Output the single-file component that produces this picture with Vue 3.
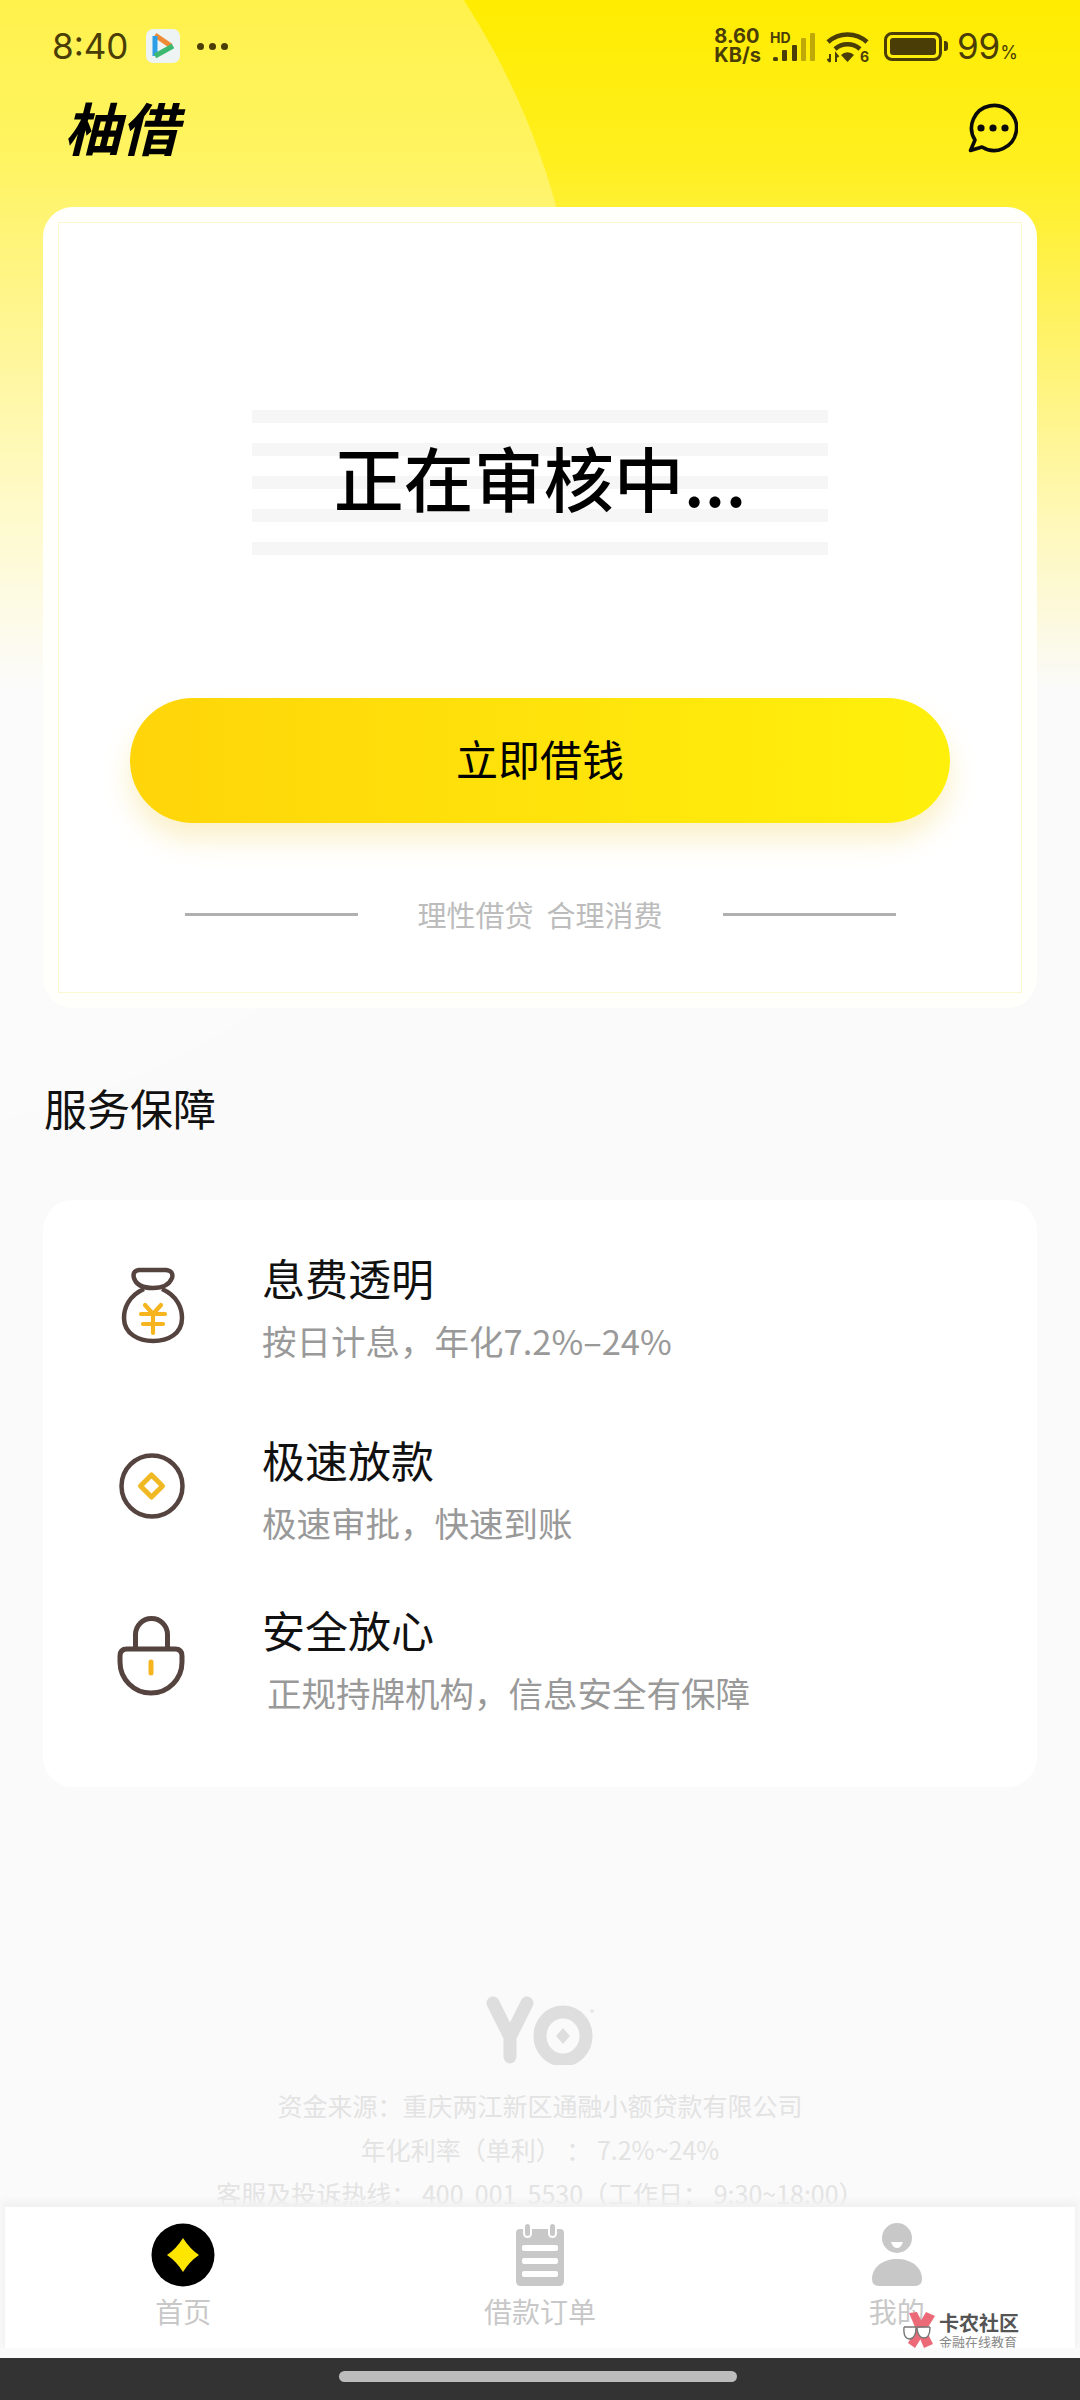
<script setup>
const stripes = [1, 2, 3, 4, 5];

const services = [
  { title: "息费透明", desc: "按日计息\uFF0C年化7.2%–24%", icon: "bag" },
  { title: "极速放款", desc: "极速审批\uFF0C快速到账", icon: "coin" },
  { title: "安全放心", desc: "正规持牌机构\uFF0C信息安全有保障", icon: "lock" },
];

const footerLines = [
  "资金来源\uFF1A重庆两江新区通融小额贷款有限公司",
  "年化利率\uFF08单利\uFF09\u00A0\uFF1A\u00A07.2%~24%",
  "客服及投诉热线\uFF1A\u00A0400\u00A0\u00A0001\u00A0\u00A05530\uFF08工作日\uFF1A\u00A09:30~18:00\uFF09",
];
</script>

<template>
  <div class="page">
    <div class="bg-circle"></div>

    <div class="main">
      <div class="status">
        <div class="status-left">
          <span class="time">8:40</span>
          <svg class="app-icon" width="34" height="34" viewBox="0 0 34 34">
            <rect width="34" height="34" rx="7" fill="#eef3f4" />
            <path d="M9 6 L25 17" stroke="#ef8a35" stroke-width="5" fill="none" />
            <path d="M9 7 L9 27" stroke="#2d9fe8" stroke-width="5" fill="none" />
            <path d="M9 27 L27 17" stroke="#3cb871" stroke-width="5" fill="none" />
          </svg>
          <span class="dots"><i></i><i></i><i></i></span>
        </div>
        <div class="status-right">
          <div class="speed"><span>8.60</span><span>KB/s</span></div>
          <svg width="46" height="34" viewBox="0 0 46 34">
            <text x="1" y="14" class="hd">HD</text>
            <rect x="4" y="28" width="5" height="4" rx="1.5" fill="#4a3d05" />
            <rect x="13" y="21" width="5" height="11" rx="1" fill="#4a3d05" />
            <rect x="23" y="16" width="5" height="16" rx="1" fill="#4a3d05" />
            <rect x="32" y="9" width="5" height="23" rx="1" fill="#bfa908" />
            <rect x="41" y="4" width="5" height="28" rx="1" fill="#bfa908" />
          </svg>
          <svg class="wifi" width="44" height="34" viewBox="0 0 44 34">
            <path d="M2 13 A 29 29 0 0 1 41 13" stroke="#4a3d05" stroke-width="4.5" fill="none" />
            <path d="M9 20 A 19 19 0 0 1 34 20" stroke="#4a3d05" stroke-width="4.5" fill="none" />
            <path d="M15 26 A 9 9 0 0 1 28 26 L21.5 33 Z" fill="#4a3d05" />
            <path d="M4 25 V33 M1.5 30 L4 33 M10 33 V25 L12.5 28" stroke="#4a3d05" stroke-width="2" fill="none" />
            <text x="34" y="33" class="six">6</text>
          </svg>
          <div class="battery"><div class="battery-fill"></div></div>
          <div class="battery-tip"></div>
          <span class="percent">99<small>%</small></span>
        </div>
      </div>

      <div class="header">
        <div class="brand">柚借</div>
        <svg class="chat" width="50" height="50" viewBox="0 0 50 50">
          <path d="M2.5 47.5 L7 37 A 22.5 22.5 0 1 1 14 44 Z" fill="none" stroke="#0a0a0a" stroke-width="3.6" stroke-linejoin="round" />
          <circle cx="13" cy="25" r="3.6" fill="#0a0a0a" />
          <circle cx="25" cy="25" r="3.6" fill="#0a0a0a" />
          <circle cx="37" cy="25" r="3.6" fill="#0a0a0a" />
        </svg>
      </div>

      <div class="card">
        <div class="card-inner">
          <div class="review">
            <div class="stripes">
              <div v-for="s in stripes" :key="s" class="stripe"></div>
            </div>
            <div class="review-text">正在审核中...</div>
          </div>
          <button class="borrow">立即借钱</button>
          <div class="slogan">
            <span class="slogan-line"></span>
            <span class="slogan-text">理性借贷&nbsp;&nbsp;合理消费</span>
            <span class="slogan-line"></span>
          </div>
        </div>
      </div>

      <div class="section-title">服务保障</div>

      <div class="service-card">
        <div v-for="item in services" :key="item.icon" class="row" :class="'row-' + item.icon">
          <div class="row-icon">
            <svg v-if="item.icon === 'bag'" width="80" height="80" viewBox="0 0 80 80">
              <path d="M26 6 H53 Q61 7 59 14 Q55 24 40 24 Q24 24 21 14 Q19 7 26 6 Z" fill="none" stroke="#55433f" stroke-width="4.5" />
              <path d="M31 25 C15 32 11 45 11 54 C11 70 26 77 40 77 C55 77 69 70 69 54 C69 45 65 32 49 25" fill="none" stroke="#55433f" stroke-width="4.5" />
              <path d="M32 41 L40 50 L48 41 M28 50 H52 M30 60 H50 M40 50 V69" fill="none" stroke="#f6b51e" stroke-width="4.2" stroke-linecap="round" />
            </svg>
            <svg v-else-if="item.icon === 'coin'" width="80" height="80" viewBox="0 0 80 80">
              <circle cx="39" cy="40" r="30.5" fill="none" stroke="#55433f" stroke-width="4.5" />
              <path d="M38.5 29 L49.5 40 L38.5 51 L27.5 40 Z" fill="none" stroke="#f0b923" stroke-width="5" stroke-linejoin="round" />
            </svg>
            <svg v-else width="80" height="80" viewBox="0 0 80 80">
              <path d="M22.5 33 V18.5 A 16 16 0 0 1 54.5 18.5 V33" fill="none" stroke="#55433f" stroke-width="5" />
              <path d="M14 33 H62 Q69 33 69 40 V46 A 31 31 0 0 1 7 46 V40 Q7 33 14 33 Z" fill="none" stroke="#55433f" stroke-width="5" />
              <path d="M38 46 V57" stroke="#f6b51e" stroke-width="5" stroke-linecap="round" />
            </svg>
          </div>
          <div class="row-text">
            <div class="row-title">{{ item.title }}</div>
            <div class="row-desc">{{ item.desc }}</div>
          </div>
        </div>
      </div>

      <div class="company">
        <svg width="110" height="70" viewBox="0 0 110 70">
          <path d="M8 8 L25 42 L25 62 M25 42 L42 8" fill="none" stroke="#dedede" stroke-width="13" stroke-linecap="round" stroke-linejoin="round" />
          <ellipse cx="78" cy="41" rx="23" ry="24" fill="none" stroke="#dedede" stroke-width="13" />
          <path d="M78 33 L85 41 L78 49 L71 41 Z" fill="#dedede" />
          <circle cx="107" cy="16" r="2" fill="#e8e8e8" />
        </svg>
        <div class="company-lines">
          <div v-for="line in footerLines" :key="line">{{ line }}</div>
        </div>
      </div>
    </div>

    <div class="tabbar">
      <div class="tab">
        <svg width="64" height="64" viewBox="0 0 64 64">
          <circle cx="32" cy="32" r="31.5" fill="#000" />
          <path d="M32 15 Q38.5 25.5 48 32 Q38.5 38.5 32 49 Q25.5 38.5 16 32 Q25.5 25.5 32 15 Z" fill="#ffe600" />
        </svg>
        <span>首页</span>
      </div>
      <div class="tab">
        <svg width="64" height="64" viewBox="0 0 64 64">
          <path d="M12 6 H52 Q56 6 56 10 V58 Q56 63 51 63 H13 Q8 63 8 58 V10 Q8 6 12 6 Z" fill="#c8c8c8" />
          <rect x="16" y="0" width="7" height="14" rx="3.5" fill="#c8c8c8" stroke="#fff" stroke-width="2" />
          <rect x="41" y="0" width="7" height="14" rx="3.5" fill="#c8c8c8" stroke="#fff" stroke-width="2" />
          <rect x="14" y="22" width="36" height="6" rx="2" fill="#fff" />
          <rect x="14" y="35" width="36" height="6" rx="2" fill="#fff" />
          <rect x="14" y="48" width="36" height="6" rx="2" fill="#fff" />
        </svg>
        <span>借款订单</span>
      </div>
      <div class="tab">
        <svg width="64" height="64" viewBox="0 0 64 64">
          <circle cx="32" cy="15" r="15" fill="#c8c8c8" />
          <path d="M26 19 H38 Q36 25 32 25 Q28 25 26 19 Z" fill="#fff" />
          <path d="M32 36 C46 36 57 44 57 56 Q57 63 50 63 H14 Q7 63 7 56 C7 44 18 36 32 36 Z" fill="#c8c8c8" />
        </svg>
        <span>我的</span>
      </div>
      <div class="watermark">
        <svg width="35" height="36" viewBox="0 0 35 36">
          <path d="M7 1 L15 0 L31 32 L22 36 Z" fill="#ec6a78" />
          <path d="M33 4 L24 0 L6 31 L13 36 Z" fill="#ec6a78" />
          <path d="M2 15 H28 M2 15 Q1 27 8 27 Q14 26 14 16 M15 16 Q16 26 22 26 Q28 26 28 15" fill="#fff" stroke="#777" stroke-width="1.4" />
        </svg>
        <div class="watermark-text">
          <b>卡农社区</b>
          <span>金融在线教育</span>
        </div>
      </div>
    </div>

    <div class="tab-gap"></div>
    <div class="navbar"><div class="handle"></div></div>
  </div>
</template>

<style>
html,
body {
  margin: 0;
  padding: 0;
}
</style>

<style scoped>
.page {
  position: relative;
  width: 1080px;
  height: 2400px;
  overflow: hidden;
  display: flex;
  flex-direction: column;
  font-family: "Noto Sans CJK SC", "Noto Sans", sans-serif;
  background: linear-gradient(180deg, #ffec00 0, #ffef1e 160px, #fff266 330px, #fff8b8 520px, #fafafa 690px);
}

.bg-circle {
  position: absolute;
  left: -890px;
  top: -336px;
  width: 1472px;
  height: 1472px;
  border-radius: 50%;
  background: rgba(255, 255, 255, 0.3);
}

.main {
  position: relative;
  flex: 1;
  min-height: 0;
  overflow: hidden;
}

/* status bar */
.status {
  height: 92px;
  display: flex;
  justify-content: space-between;
  align-items: center;
  padding: 0 62px 0 52px;
  color: #4a3d05;
}

.status-left,
.status-right {
  display: flex;
  align-items: center;
}

.time {
  font-family: Inter, sans-serif;
  font-size: 35px;
  width: 94px;
}

.dots {
  display: flex;
  gap: 5px;
  margin-left: 17px;
}

.dots i {
  width: 7px;
  height: 7px;
  border-radius: 50%;
  background: #4a3d05;
}

.speed {
  display: flex;
  flex-direction: column;
  font-family: Inter, sans-serif;
  font-weight: 700;
  font-size: 20px;
  line-height: 19px;
  margin-right: 8px;
}

.hd {
  font-family: Inter, sans-serif;
  font-size: 14px;
  font-weight: 700;
  fill: #4a3d05;
}

.six {
  font-family: Inter, sans-serif;
  font-size: 14px;
  font-weight: 700;
  fill: #4a3d05;
}

.wifi {
  margin-left: 11px;
}

.battery {
  box-sizing: border-box;
  width: 58px;
  height: 29px;
  margin-left: 14px;
  border: 3px solid #4a3d05;
  border-radius: 8px;
  padding: 3px;
}

.battery-fill {
  height: 100%;
  background: #4a3d05;
  border-radius: 3px;
}

.battery-tip {
  width: 4px;
  height: 10px;
  margin-left: 2px;
  background: #4a3d05;
  border-radius: 0 3px 3px 0;
}

.percent {
  margin-left: 9px;
  font-family: Inter, sans-serif;
  font-size: 35px;
}

.percent small {
  font-size: 18px;
}

.header {
  height: 115px;
  display: flex;
  justify-content: space-between;
  align-items: flex-start;
  padding: 2px 62px 0 64px;
  box-sizing: border-box;
}

.chat {
  margin-top: 9px;
}

.brand {
  font-size: 57px;
  line-height: 64px;
  font-weight: 700;
  font-style: italic;
  color: #000;
}

/* main card */
.card {
  box-sizing: border-box;
  margin: 0 43px;
  height: 801px;
  padding: 15px;
  background: #fffffb;
  border-radius: 30px;
}

.card-inner {
  box-sizing: border-box;
  height: 771px;
  padding-top: 187px;
  border: 1px solid #fbf8d2;
  background: #fff;
  display: flex;
  flex-direction: column;
  align-items: center;
}

.review {
  display: grid;
  width: 576px;
  height: 145px;
}

.stripes,
.review-text {
  grid-area: 1 / 1;
}

.stripes {
  display: flex;
  flex-direction: column;
  justify-content: space-between;
}

.stripe {
  height: 13px;
  background: #f6f6f6;
}

.review-text {
  justify-self: center;
  align-self: center;
  margin-bottom: 12px;
  font-size: 70px;
  line-height: 90px;
  font-weight: 500;
  color: #000;
  white-space: nowrap;
}

.borrow {
  width: 820px;
  height: 125px;
  margin-top: 143px;
  padding: 0 0 6px;
  flex: none;
  border: none;
  border-radius: 63px;
  font-family: inherit;
  font-size: 42px;
  color: #000;
  background: linear-gradient(90deg, #ffd509, #fff00c);
  box-shadow: 0 16px 28px rgba(240, 200, 60, 0.28);
}

.slogan {
  margin-top: 71px;
  display: flex;
  align-items: center;
  height: 40px;
  width: 711px;
  justify-content: space-between;
}

.slogan-line {
  width: 173px;
  height: 3px;
  background: #b0b0b0;
}

.slogan-text {
  font-size: 29px;
  color: #bcbcbc;
}

.section-title {
  margin: 69px 0 63px 44px;
  font-size: 43px;
  line-height: 60px;
  color: #111;
}

/* service list */
.service-card {
  box-sizing: border-box;
  margin: 0 43px;
  height: 587px;
  padding: 47px 0 0 70px;
  background: #fff;
  border-radius: 30px;
}

.row {
  display: flex;
  align-items: center;
}

.row-coin {
  margin-top: 64px;
}

.row-lock {
  margin-top: 52px;
}

.row-icon {
  width: 80px;
  height: 80px;
  margin-right: 69px;
  position: relative;
  top: -2px;
}

.row-title {
  font-size: 43px;
  line-height: 60px;
  color: #111;
}

.row-desc {
  margin-top: 8px;
  font-size: 34.5px;
  line-height: 50px;
  color: #999;
}

.row-lock .row-desc {
  padding-left: 5px;
}

/* company info */
.company {
  margin-top: 208px;
  display: flex;
  flex-direction: column;
  align-items: center;
}

.company svg {
  display: block;
}

.company-lines {
  margin-top: 18px;
  font-size: 25px;
  line-height: 44px;
  color: #e3e3e3;
  text-align: center;
  white-space: nowrap;
}

/* bottom tabs */
.tabbar {
  position: relative;
  height: 141px;
  margin: 0 5px;
  flex: none;
  display: grid;
  grid-template-columns: repeat(3, 1fr);
  background: #fff;
  box-shadow: 0 -3px 7px 3px #f1f1f1;
}

.tab {
  display: flex;
  flex-direction: column;
  align-items: center;
  padding-top: 16px;
}

.tab svg {
  display: block;
}

.tab span {
  margin-top: 4px;
  font-size: 28px;
  line-height: 40px;
  color: #c8c8c8;
}

.watermark {
  position: absolute;
  left: 897px;
  top: 105px;
  display: flex;
  align-items: center;
  gap: 2px;
}

.watermark-text {
  display: flex;
  flex-direction: column;
  line-height: 1;
}

.watermark-text b {
  font-size: 20px;
  color: #555;
}

.watermark-text span {
  margin-top: 2px;
  font-size: 13px;
  color: #888;
}

.tab-gap {
  position: relative;
  height: 10px;
  flex: none;
  background: #fafafa;
}

.navbar {
  position: relative;
  height: 42px;
  flex: none;
  background: #333;
  display: flex;
  justify-content: center;
  padding: 13px 5px 0 0;
  box-sizing: border-box;
}

.handle {
  width: 398px;
  height: 11px;
  border-radius: 6px;
  background: #bcbcbc;
}
</style>
